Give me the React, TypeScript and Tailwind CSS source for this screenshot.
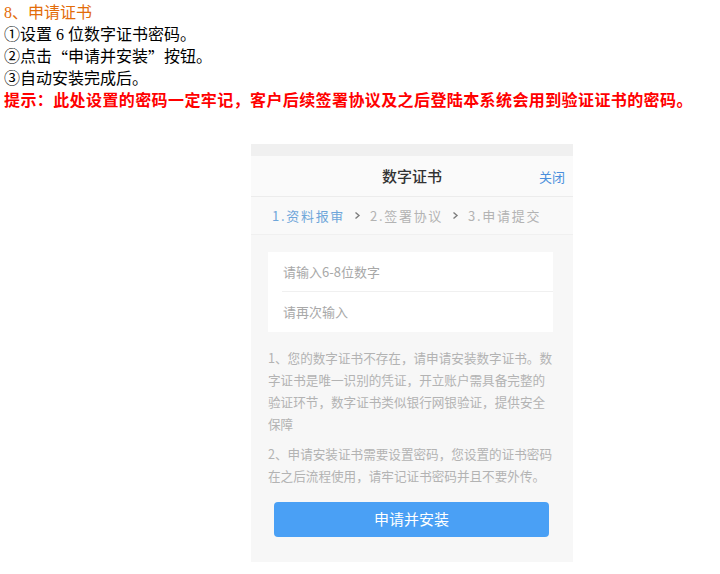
const Chevron = () => (
  <svg width="7" height="9" viewBox="0 0 7 9" className="mx-[9px]">
    <path d="M1.5 1.5 L5 4.5 L1.5 7.5" fill="none" stroke="#7d7d7d" strokeWidth="1.4" />
  </svg>
);

const App = () => {
  return (
    <div className="h-[574px] w-[720px] bg-white">
      {/* ==== Instructions ==== */}
      <div className="pl-[4px] pt-[2px] text-[16px] leading-[22px] text-black [font-family:'Liberation_Serif','Noto_Sans_CJK_SC',serif]">
        <div className="text-[#e36c09]">8、申请证书</div>
        <div>①设置 6 位数字证书密码。</div>
        <div className="h-[22px]">
          ②点击<span className="inline-block h-[22px] w-[16px] overflow-hidden text-right align-top leading-[22px] [font-family:'Noto_Sans_CJK_SC',sans-serif]">“</span>申请并安装
          <span className="inline-block h-[22px] w-[16px] overflow-hidden text-left align-top leading-[22px] [font-family:'Noto_Sans_CJK_SC',sans-serif]">”</span>按钮。
        </div>
        <div>③自动安装完成后。</div>
        <div className="font-bold tracking-[0.4px] text-[#ff0000]">
          提示：此处设置的密码一定牢记，客户后续签署协议及之后登陆本系统会用到验证证书的密码。
        </div>
      </div>

      {/* ==== Phone panel ==== */}
      <div className="ml-[251px] mt-[32px] h-[418px] w-[322px] bg-[#f7f7f7] [font-family:'Noto_Sans_CJK_SC',sans-serif]">
        <div className="h-[12px] bg-[#f0f0f0]" />

        {/* header */}
        <div className="relative flex h-[41px] items-center justify-center border-b border-[#ececec] bg-[#fafafa]">
          <span className="text-[15px] font-medium text-[#333]">数字证书</span>
          <span className="absolute right-[8px] top-[11px] text-[13px] text-[#4a8fdc]">关闭</span>
        </div>

        {/* steps */}
        <div className="flex h-[38px] items-center border-b border-[#f0f0f0] bg-[#f9f9f9] pl-[21px] text-[13px] tracking-[1.7px]">
          <span className="text-[#6fa6da]">1.资料报审</span>
          <Chevron />
          <span className="text-[#b3b3b3]">2.签署协议</span>
          <Chevron />
          <span className="text-[#b3b3b3]">3.申请提交</span>
        </div>

        {/* inputs */}
        <div className="ml-[17px] mt-[17px] w-[285px] bg-white text-[13px] text-[#a8a8a8]">
          <div className="flex h-[39px] items-center pl-[15px]">请输入6-8位数字</div>
          <div className="ml-[14px] h-px bg-[#f0f0f0]" />
          <div className="flex h-[40px] items-center pl-[15px]">请再次输入</div>
        </div>

        {/* notes */}
        <div className="ml-[17px] mt-[15px] w-[300px] text-[12.6px] leading-[22px] text-[#b3b3b3]">
          <div>
            <div className="whitespace-nowrap">1、您的数字证书不存在，请申请安装数字证书。数</div>
            <div className="whitespace-nowrap">字证书是唯一识别的凭证，开立账户需具备完整的</div>
            <div className="whitespace-nowrap">验证环节，数字证书类似银行网银验证，提供安全</div>
            <div>保障</div>
          </div>
          <div className="mt-[8px]">
            <div className="whitespace-nowrap">2、申请安装证书需要设置密码，您设置的证书密码</div>
            <div className="whitespace-nowrap">在之后流程使用，请牢记证书密码并且不要外传。</div>
          </div>
        </div>

        {/* button */}
        <button
          className="ml-[23px] mt-[15px] flex h-[35px] w-[275px] items-center justify-center rounded-[4px] bg-[#4aa0f5] text-[15px] text-white"
          type="button"
        >
          申请并安装
        </button>
      </div>
    </div>
  );
};

export default App;
